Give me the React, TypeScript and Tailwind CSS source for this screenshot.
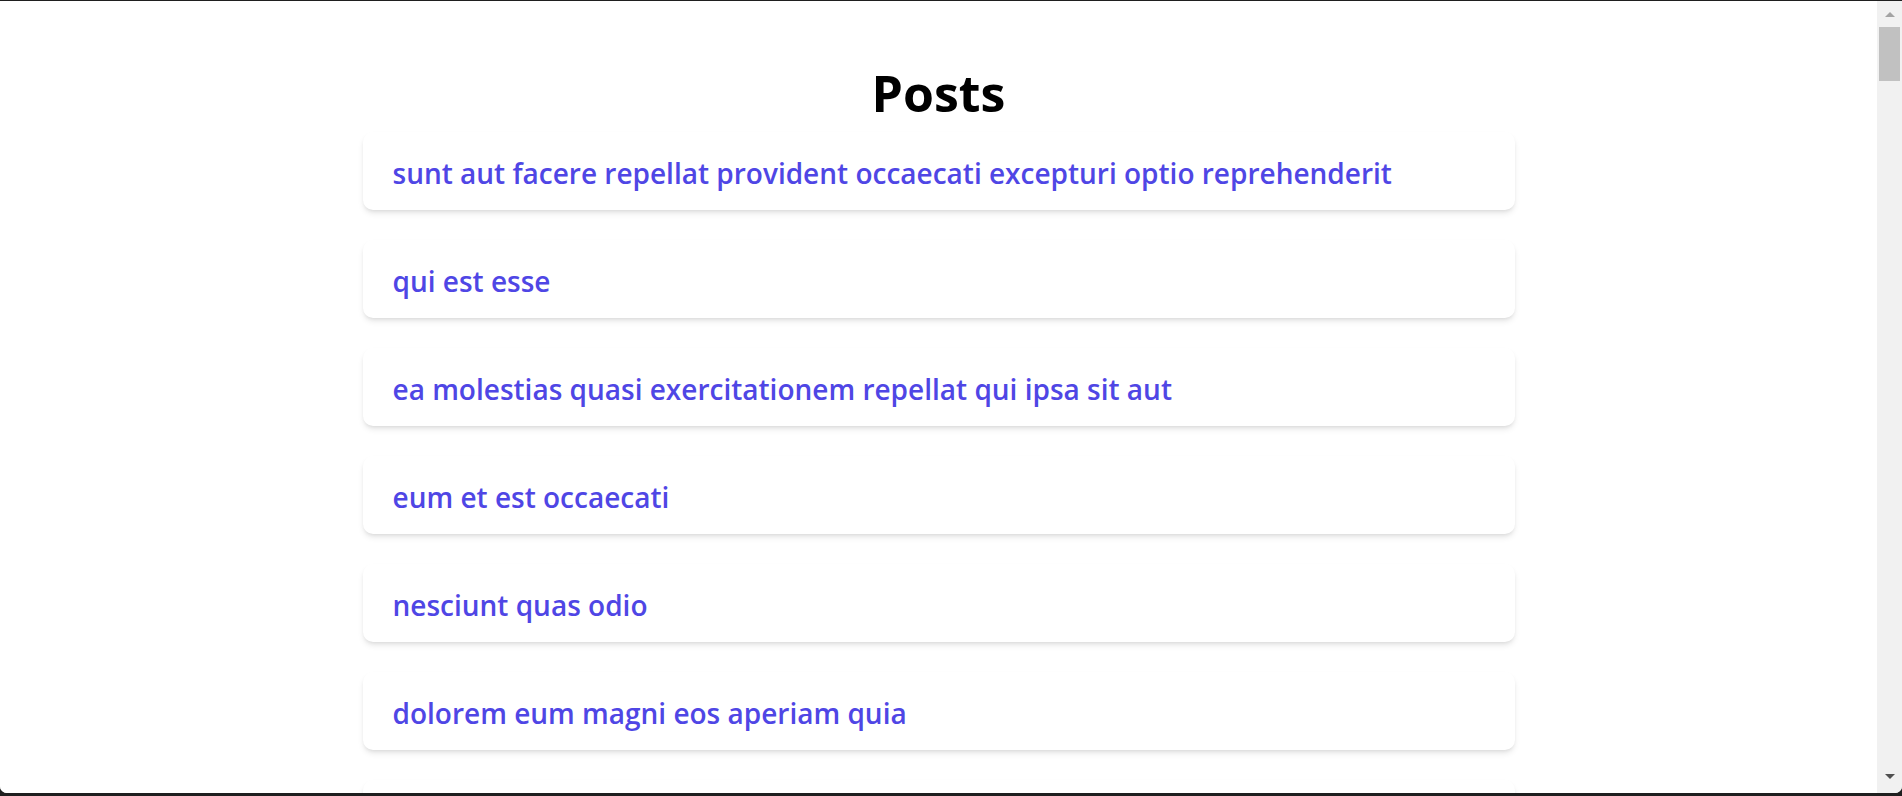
import React from "react";

const posts = [
  "sunt aut facere repellat provident occaecati excepturi optio reprehenderit",
  "qui est esse",
  "ea molestias quasi exercitationem repellat qui ipsa sit aut",
  "eum et est occaecati",
  "nesciunt quas odio",
  "dolorem eum magni eos aperiam quia",
  "magnam facilis autem",
];

export default function App() {
  return (
    <div
      className="h-[796px] w-full overflow-hidden bg-[#1f1f1f] pt-px pb-[3px]"
      style={{ fontFamily: '"Open Sans", "Noto Sans", sans-serif' }}
    >
      <div className="flex h-full overflow-hidden rounded-b-[7px] bg-white">
        <main className="flex-1 overflow-hidden bg-white pt-[67px] flex flex-col items-center">
          <h1 className="text-[50px] leading-none font-bold text-black mb-[14px]">Posts</h1>
          <ul className="w-full max-w-[1152px] flex flex-col gap-[30px]">
            {posts.map((p) => (
              <li
                key={p}
                className="h-[78px] shrink-0 flex items-center px-[30px] pt-[4px] rounded-[10px] bg-white shadow-md"
              >
                <span className="text-[28px] leading-[36px] font-semibold text-[#4f46e5]">{p}</span>
              </li>
            ))}
          </ul>
        </main>
        <div className="w-[25px] shrink-0 bg-[#f1f1f1] flex flex-col px-[2px]">
          <div className="h-[26px] flex items-start justify-center pt-[11px]">
            <div className="w-0 h-0 border-x-[5px] border-x-transparent border-b-[5px] border-b-[#a3a3a3]" />
          </div>
          <div className="h-[54px] bg-[#c1c1c1]" />
          <div className="flex-1" />
          <div className="h-[26px] flex items-start justify-center pt-[7px]">
            <div className="w-0 h-0 border-x-[5px] border-x-transparent border-t-[5px] border-t-[#505050]" />
          </div>
        </div>
      </div>
    </div>
  );
}
